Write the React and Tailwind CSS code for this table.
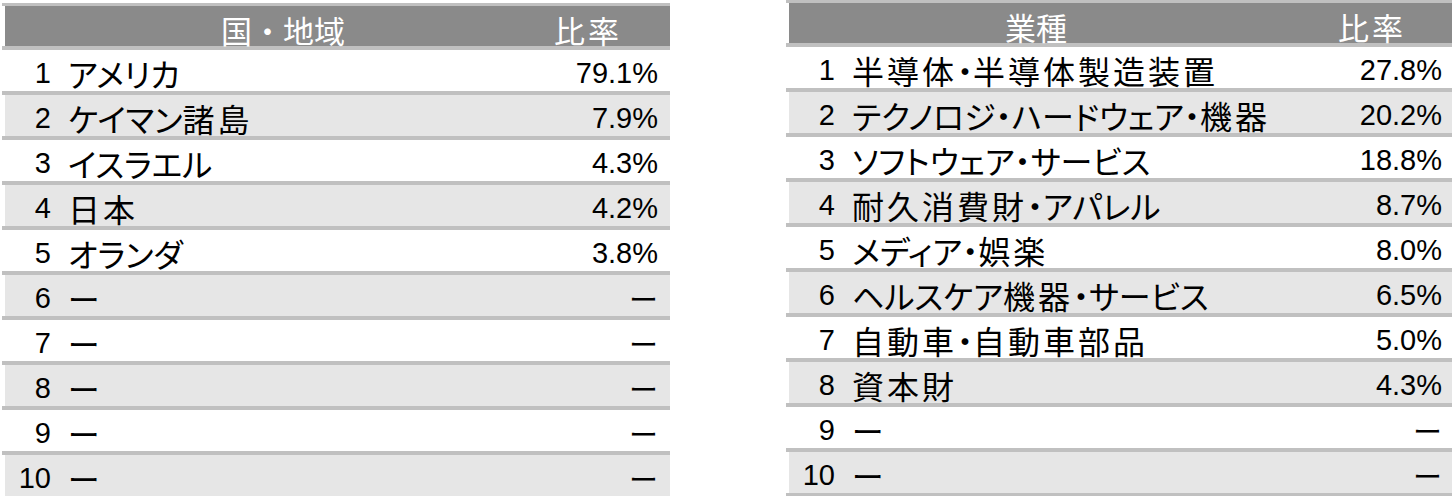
import React from 'react';

const countries = [
  ['1', 'アメリカ', '79.1%'],
  ['2', 'ケイマン諸島', '7.9%'],
  ['3', 'イスラエル', '4.3%'],
  ['4', '日本', '4.2%'],
  ['5', 'オランダ', '3.8%'],
  ['6', 'ー', 'ー'],
  ['7', 'ー', 'ー'],
  ['8', 'ー', 'ー'],
  ['9', 'ー', 'ー'],
  ['10', 'ー', 'ー'],
];

const sectors = [
  ['1', '半導体・半導体製造装置', '27.8%'],
  ['2', 'テクノロジ・ハードウェア・機器', '20.2%'],
  ['3', 'ソフトウェア・サービス', '18.8%'],
  ['4', '耐久消費財・アパレル', '8.7%'],
  ['5', 'メディア・娯楽', '8.0%'],
  ['6', 'ヘルスケア機器・サービス', '6.5%'],
  ['7', '自動車・自動車部品', '5.0%'],
  ['8', '資本財', '4.3%'],
  ['9', 'ー', 'ー'],
  ['10', 'ー', 'ー'],
];

const jp = { fontFamily: '"Noto Sans CJK JP", sans-serif' };
const num = { fontFamily: '"Liberation Sans", "Noto Sans CJK JP", sans-serif' };

// kanji sit a bit wider than kana in the source font
const Name = ({ text }) => (
  <>
    {text.split(/([\u4e00-\u9fff]+)/).filter(Boolean).map((part, i) =>
      /[\u4e00-\u9fff]/.test(part)
        ? <span key={i} className="tracking-[3px]">{part}</span>
        : <span key={i}>{part}</span>
    )}
  </>
);

const RankTable = ({ title, rows, className }) => (
  <div className={`w-[668px] shrink-0 ${className}`}>
    <div className="h-[3px] bg-[#c0c0c0]" />
    <div className="ml-[3px] h-[40px] bg-[#8a8a8a] text-white flex items-center pt-[6px] text-[31px] leading-none" style={jp}>
      <span className="ml-[216px]">{title}</span>
      <span className="ml-auto mr-[48px] tracking-[3px]">比率</span>
    </div>
    {rows.map(([rank, name, ratio], i) => (
      <div key={rank}>
        <div className="h-[4px] bg-[#c0c0c0]" />
        <div className={`ml-[3px] h-[41px] flex items-center pt-[5px] text-black leading-none ${i % 2 ? 'bg-[#e6e6e6]' : 'bg-white'}`}>
          <span className="w-[46px] text-right text-[29px]" style={num}>{rank}</span>
          <span className="ml-[17px] text-[32px] [font-feature-settings:'palt']" style={jp}>
            <Name text={name} />
          </span>
          <span className="ml-auto mr-[12px] text-[29px]" style={ratio === 'ー' ? jp : num}>{ratio}</span>
        </div>
      </div>
    ))}
    <div className="h-[4px] bg-[#c0c0c0]" />
  </div>
);

export default function App() {
  return (
    <div className="w-[1452px] bg-white flex items-start pl-[2px] gap-[116px]">
      <RankTable title="国・地域" rows={countries} className="mt-[3px]" />
      <RankTable title="業種" rows={sectors} />
    </div>
  );
}
